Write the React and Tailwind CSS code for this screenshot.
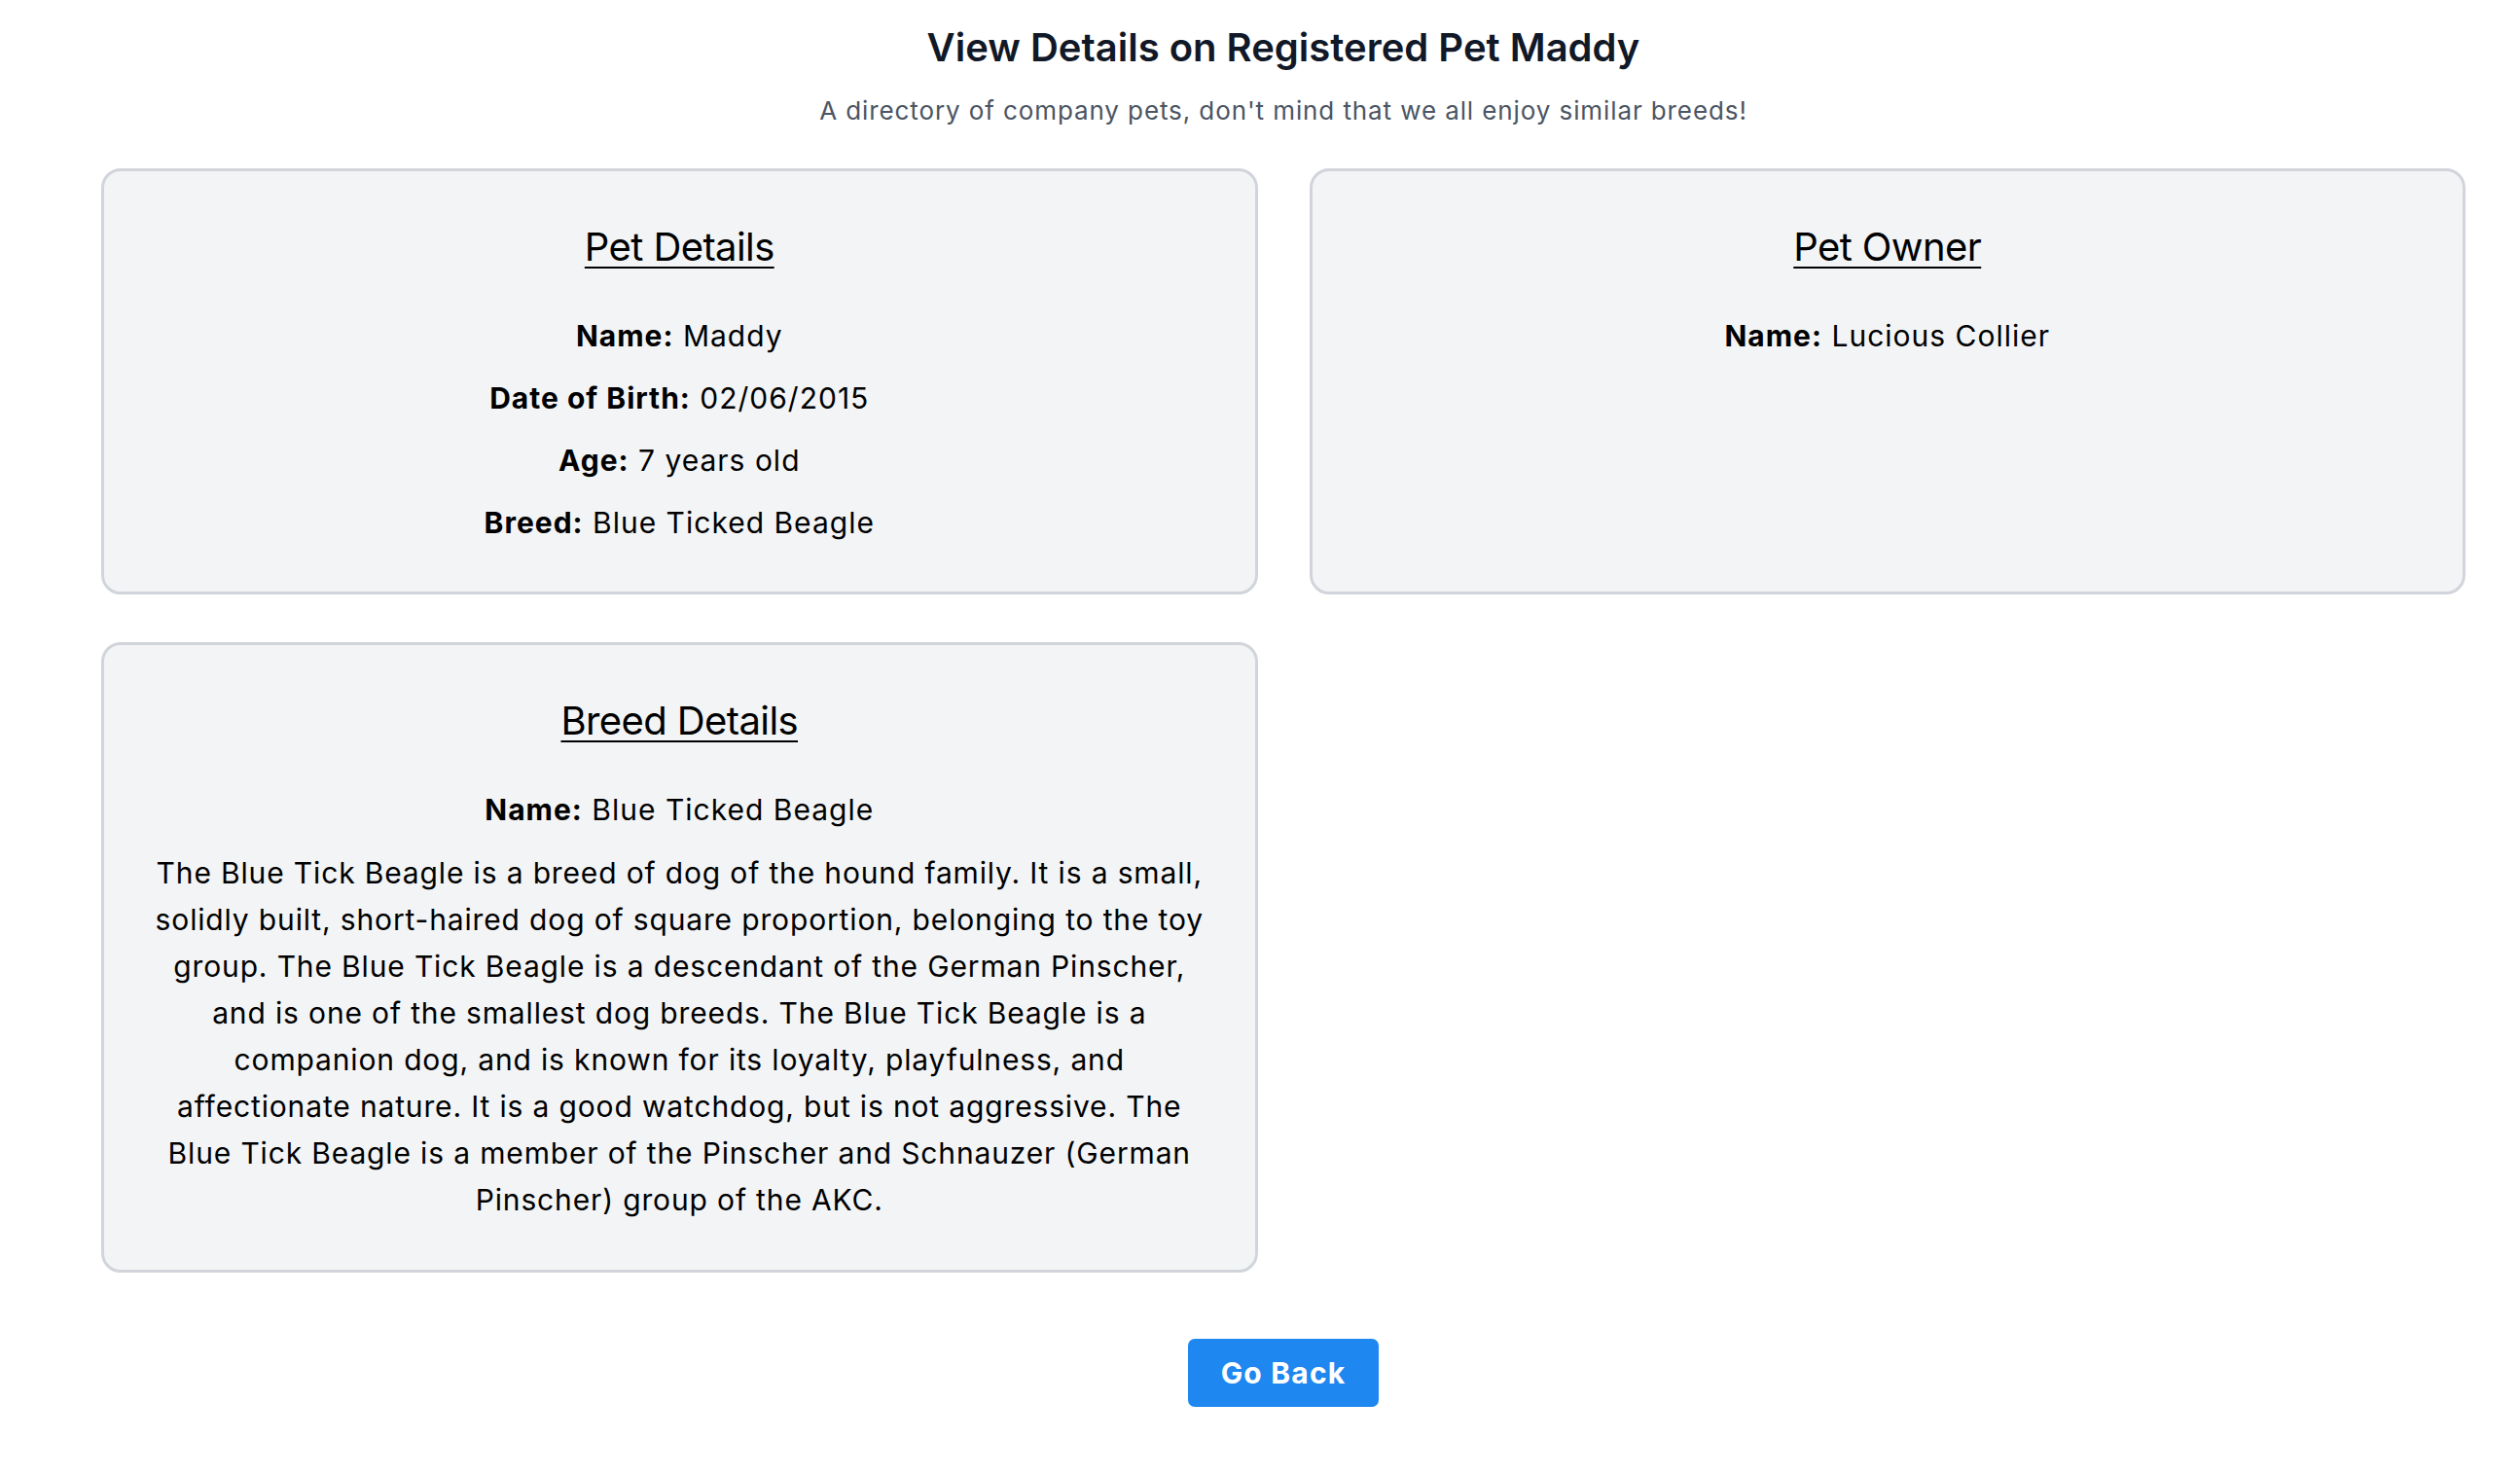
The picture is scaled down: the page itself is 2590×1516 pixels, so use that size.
import React from "react";

const lines = [
  "The Blue Tick Beagle is a breed of dog of the hound family. It is a small,",
  "solidly built, short-haired dog of square proportion, belonging to the toy",
  "group. The Blue Tick Beagle is a descendant of the German Pinscher,",
  "and is one of the smallest dog breeds. The Blue Tick Beagle is a",
  "companion dog, and is known for its loyalty, playfulness, and",
  "affectionate nature. It is a good watchdog, but is not aggressive. The",
  "Blue Tick Beagle is a member of the Pinscher and Schnauzer (German",
  "Pinscher) group of the AKC.",
];

function Row({ label, value }) {
  return (
    <p className="text-[30px] leading-[46px] tracking-[1px] text-black">
      <span className="font-bold">{label}:</span> {value}
    </p>
  );
}

function Card({ title, children }) {
  return (
    <div className="border-[3px] border-[#d1d5db] bg-[#f3f4f6] rounded-[20px] pt-[55px] pb-[48px] px-[53px] text-center">
      <h2 className="text-[40px] leading-[46px] tracking-[-0.6px] underline underline-offset-[6px] decoration-[2px] text-black">
        {title}
      </h2>
      <div className="mt-[45px] flex flex-col gap-[18px]">{children}</div>
    </div>
  );
}

export default function App() {
  return (
    <div
      className="min-h-screen bg-white pl-[48px]"
      style={{ fontFamily: "Inter, 'Noto Sans', sans-serif" }}
    >
      <div className="px-[56px] pt-[22px] flex flex-col items-center">
        <h1 className="text-[40px] leading-[53px] font-semibold text-[#111827] text-center">
          View Details on Registered Pet Maddy
        </h1>
        <p className="mt-[19px] text-[26px] leading-[40px] tracking-[0.9px] text-[#4b5563] text-center">
          A directory of company pets, don't mind that we all enjoy similar breeds!
        </p>
        <div className="mt-[39px] w-full grid grid-cols-2 gap-x-[53px] gap-y-[49px]">
          <Card title="Pet Details">
            <Row label="Name" value="Maddy" />
            <Row label="Date of Birth" value="02/06/2015" />
            <Row label="Age" value="7 years old" />
            <Row label="Breed" value="Blue Ticked Beagle" />
          </Card>
          <Card title="Pet Owner">
            <Row label="Name" value="Lucious Collier" />
          </Card>
          <Card title="Breed Details">
            <Row label="Name" value="Blue Ticked Beagle" />
            <p className="text-[30px] leading-[48px] tracking-[0.85px] text-black whitespace-nowrap -mx-[20px]">
              {lines.map((l, i) => (
                <React.Fragment key={i}>
                  {l}
                  {i < lines.length - 1 && <br />}
                </React.Fragment>
              ))}
            </p>
          </Card>
        </div>
        <button className="mt-[68px] w-[196px] h-[70px] rounded-[7px] bg-[#1e87f0] text-white text-[30px] tracking-[1.2px] font-bold">
          Go Back
        </button>
      </div>
    </div>
  );
}
